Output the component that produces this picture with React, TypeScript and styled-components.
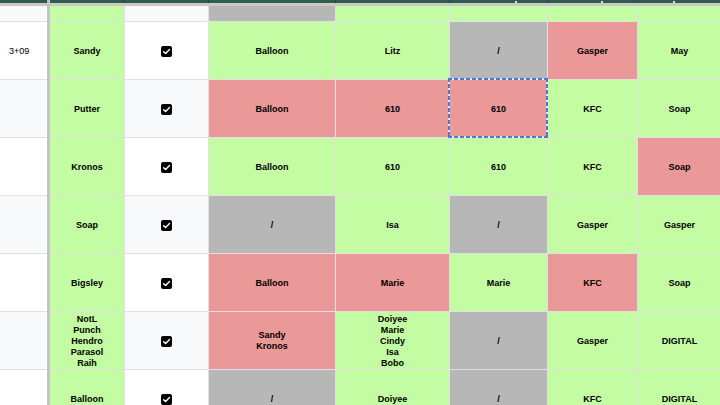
import React from 'react';
import styled, { createGlobalStyle } from 'styled-components';

const Global = createGlobalStyle`
  html, body { margin: 0; padding: 0; background: #ffffff; overflow: hidden; }
  body { font-family: "Liberation Sans", Arial, sans-serif; }
`;

type Tone = 'g' | 'r' | 'x';

const toneColor: Record<Tone, string> = {
  g: '#c4fca4',
  r: '#ea9898',
  x: '#b7b7b7',
};

const Sheet = styled.div`
  display: grid;
  width: 720px;
  height: 405px;
  overflow: hidden;
  grid-template-columns: 47px 3px 75px 84px 127px 114px 98px 90px 84px;
  grid-template-rows: 3px 3px 16px repeat(7, 58px);
  font-family: "Liberation Sans", Arial, sans-serif;
  color: #000;
`;

const FrozenDivider = styled.div`
  grid-column: 2;
  grid-row: 1 / -1;
  background: #c4c4c4;
`;

const HeaderCell = styled.div`
  background: #2f5d47;
  border-right: 1px solid #234a37;
  box-sizing: border-box;
  position: relative;
`;

const HeaderMark = styled.span<{ $left: number }>`
  position: absolute;
  bottom: 0;
  left: ${(p) => p.$left}px;
  width: 2px;
  height: 2px;
  background: #d8e6de;
`;

const FreezeBar = styled.div`
  background: #c9c9c9;
`;

const Cell = styled.div<{ $bg: string }>`
  box-sizing: border-box;
  position: relative;
  display: flex;
  align-items: center;
  justify-content: center;
  text-align: center;
  padding-top: 1px;
  background: ${(p) => p.$bg};
  border-right: 1px solid #e1e1e1;
  border-bottom: 1px solid #e1e1e1;
  font-size: 9px;
  font-weight: 700;
  line-height: 11px;
  white-space: pre-line;
`;

const KeyCell = styled(Cell)`
  border-right: none;
  justify-content: flex-start;
  padding-left: 9px;
  font-weight: 400;
`;

const Selection = styled.span`
  position: absolute;
  top: -2px;
  left: -2px;
  right: -1px;
  bottom: -1px;
  pointer-events: none;
  background:
    repeating-linear-gradient(90deg, #4a78d2 0 4px, rgba(255, 255, 255, 0.55) 4px 6px) top left / 100% 2px no-repeat,
    repeating-linear-gradient(90deg, #4a78d2 0 4px, rgba(255, 255, 255, 0.55) 4px 6px) bottom left / 100% 2px no-repeat,
    repeating-linear-gradient(180deg, #4a78d2 0 4px, rgba(255, 255, 255, 0.55) 4px 6px) top left / 2px 100% no-repeat,
    repeating-linear-gradient(180deg, #4a78d2 0 4px, rgba(255, 255, 255, 0.55) 4px 6px) top right / 2px 100% no-repeat;
`;

const Box = styled.span`
  display: inline-flex;
  align-items: center;
  justify-content: center;
  width: 11px;
  height: 11px;
  border-radius: 2px;
  background: #000;
`;

const Checkbox = () => (
  <Box>
    <svg width="11" height="11" viewBox="0 0 11 11">
      <path d="M2.6 5.7 L4.6 7.6 L8.5 3.5" fill="none" stroke="#fff" strokeWidth="1.4" strokeLinecap="round" strokeLinejoin="round" />
    </svg>
  </Box>
);

type V = [string, Tone];

interface Row {
  key: string;
  name: V;
  checked: boolean;
  cols: V[];
  selectedCol?: number;
}

const rows: Row[] = [
  { key: '', name: ['', 'g'], checked: false, cols: [['', 'x'], ['', 'g'], ['', 'g'], ['', 'g'], ['', 'g']] },
  { key: '3+09', name: ['Sandy', 'g'], checked: true, cols: [['Balloon', 'g'], ['Litz', 'g'], ['/', 'x'], ['Gasper', 'r'], ['May', 'g']] },
  { key: '', name: ['Putter', 'g'], checked: true, cols: [['Balloon', 'r'], ['610', 'r'], ['610', 'r'], ['KFC', 'g'], ['Soap', 'g']], selectedCol: 2 },
  { key: '', name: ['Kronos', 'g'], checked: true, cols: [['Balloon', 'g'], ['610', 'g'], ['610', 'g'], ['KFC', 'g'], ['Soap', 'r']] },
  { key: '', name: ['Soap', 'g'], checked: true, cols: [['/', 'x'], ['Isa', 'g'], ['/', 'x'], ['Gasper', 'g'], ['Gasper', 'g']] },
  { key: '', name: ['Bigsley', 'g'], checked: true, cols: [['Balloon', 'r'], ['Marie', 'r'], ['Marie', 'g'], ['KFC', 'r'], ['Soap', 'g']] },
  {
    key: '',
    name: ['NotL\nPunch\nHendro\nParasol\nRaih', 'g'],
    checked: true,
    cols: [['Sandy\nKronos', 'r'], ['Doiyee\nMarie\nCindy\nIsa\nBobo', 'g'], ['/', 'x'], ['Gasper', 'g'], ['DIGITAL', 'g']],
  },
  { key: '', name: ['Balloon', 'g'], checked: true, cols: [['/', 'x'], ['Doiyee', 'g'], ['/', 'x'], ['KFC', 'g'], ['DIGITAL', 'g']] },
];

const headerMarks: Record<number, number> = { 5: 65, 6: 53, 7: 35 };

export default function App() {
  return (
    <>
      <Global />
      <Sheet>
        <FrozenDivider />
        {Array.from({ length: 8 }).map((_, i) => (
          <HeaderCell key={`h${i}`}>
            {headerMarks[i] !== undefined && <HeaderMark $left={headerMarks[i]} />}
          </HeaderCell>
        ))}
        {Array.from({ length: 8 }).map((_, i) => (
          <FreezeBar key={`f${i}`} />
        ))}
        {rows.map((r, ri) => {
          const band = ri % 2 === 0 ? '#f8f9fa' : '#ffffff';
          return (
            <React.Fragment key={ri}>
              <KeyCell $bg={band}>{r.key}</KeyCell>
              <Cell $bg={toneColor[r.name[1]]}>{r.name[0]}</Cell>
              <Cell $bg={band}>{r.checked && <Checkbox />}</Cell>
              {r.cols.map(([text, tone], ci) => (
                <Cell key={ci} $bg={toneColor[tone]}>
                  {text}
                  {r.selectedCol === ci && <Selection />}
                </Cell>
              ))}
            </React.Fragment>
          );
        })}
      </Sheet>
    </>
  );
}
